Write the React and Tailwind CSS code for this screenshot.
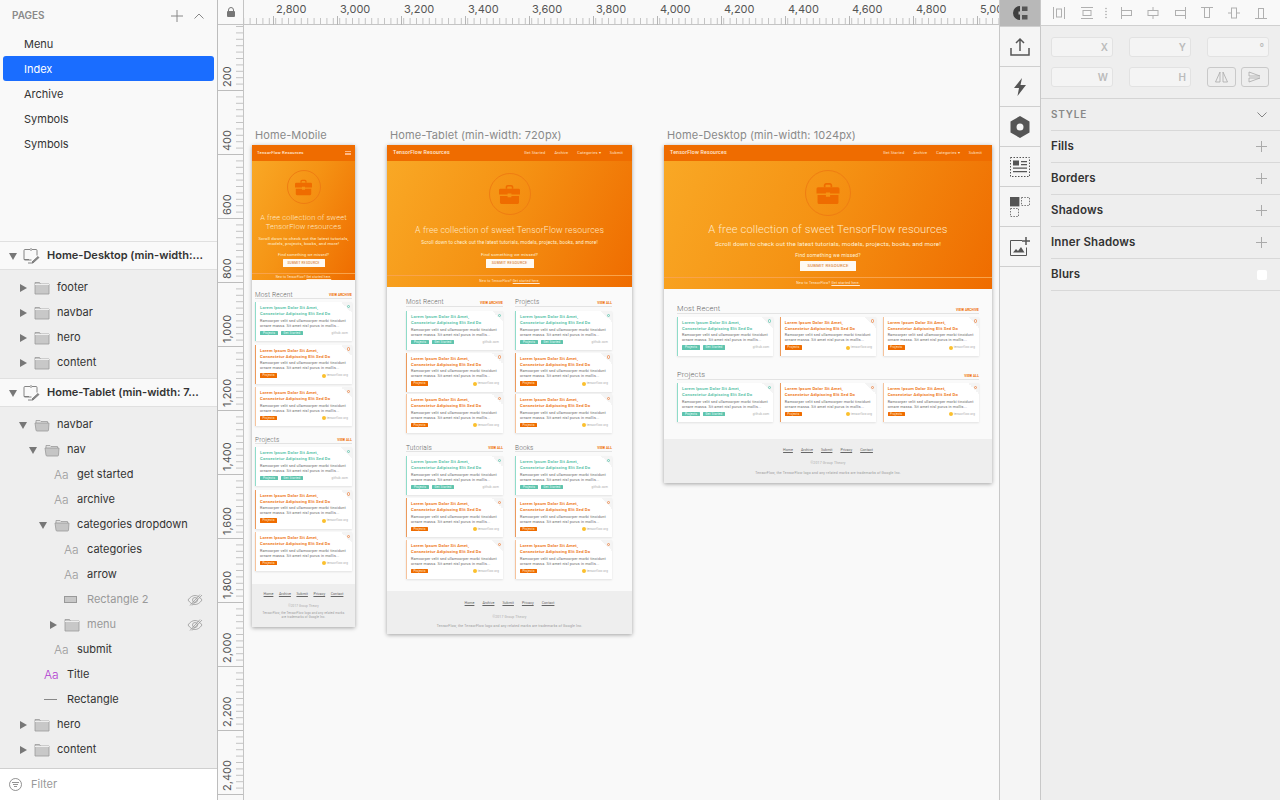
import React from 'react';

const Briefcase = ({ className }) => (
  <svg viewBox="0 0 24 22" className={className} fill="#ef6c00">
    <path d="M8 5V3.2C8 2 9 1 10.2 1h3.6C15 1 16 2 16 3.2V5h-1.6V3.4c0-.4-.3-.8-.8-.8h-3.2c-.5 0-.8.4-.8.8V5z" />
    <path d="M2.5 5h19A1.5 1.5 0 0 1 23 6.500V11H14v-1h-4v1H1V6.500A1.500 1.500 0 0 1 2.500 5z" />
    <path d="M2 12.500h8V14h4v-1.500h8v7A1.500 1.500 0 0 1 20.500 21h-17A1.500 1.500 0 0 1 2 19.500z" />
  </svg>
);

const Card = ({ teal, soft }) => (
  <div className={`relative flex flex-col h-[39px] bg-white pl-[4px] pr-[4px] pt-[3px] shadow-[0_0.5px_2px_rgba(0,0,0,0.1)] border-l-[1.3px] ${teal ? 'border-[#8fdcc9]' : soft ? 'border-[#f6c39c]' : 'border-[#ec9a5c]'}`}>
    <div className="absolute top-0 right-0 w-[11px] h-[11px] bg-[linear-gradient(45deg,transparent_50%,#f4f4f4_50%)]" />
    <div className={`absolute top-[2.500px] right-[2px] w-[3.500px] h-[3.500px] rounded-full border-[0.7px] ${teal ? 'border-[#6fcdb8]' : 'border-[#f0935a]'}`} />
    <div className={`text-[4.200px] leading-[6px] font-semibold whitespace-nowrap ${teal ? 'text-[#55bfa6]' : 'text-[#ee7411]'}`}>
      <div>Lorem Ipsum Dolor Sit Amet,</div>
      <div>Consectetur Adipiscing Elit Sed Do</div>
    </div>
    <div className="mt-[1.500px] text-[3.700px] leading-[5.300px] text-[#666] whitespace-nowrap">
      <div>Ramcorper velit sed ullamcorper morbi tincidunt</div>
      <div>ornare massa. Sit amet nisl purus in mollis...</div>
    </div>
    <div className="mt-[1.500px] flex items-center text-[3px] leading-[5px]">
      {teal ? (
        <>
          <span className="h-[4.500px] w-[18px] text-center bg-[#5fc4ae] text-[#e8fff9] rounded-[0.5px]">Projects</span>
          <span className="ml-[3px] h-[4.500px] w-[22px] text-center bg-[#5fc4ae] text-[#e8fff9] rounded-[0.5px]">Get Started</span>
          <span className="ml-auto text-[#aaa]">github.com</span>
        </>
      ) : (
        <>
          <span className="h-[4.500px] w-[17px] text-center bg-[#ef6c00] text-[#ffe8d2] rounded-[0.5px]">Projects</span>
          <span className="ml-auto w-[4px] h-[4px] rounded-full bg-[#fbc02d]" />
          <span className="ml-[1px] text-[#aaa]">tensorflow.org</span>
        </>
      )}
    </div>
  </div>
);

const Head = ({ title, link, className, size }) => (
  <div className={`flex items-end justify-between border-b-[0.5px] border-[#e3e3e3] ${className}`}>
    <span className={`${size} font-light text-[#666] whitespace-nowrap`}>{title}</span>
    <span className="text-[3.200px] leading-[5px] font-bold text-[#ef6c00] tracking-[0.1px]">{link}</span>
  </div>
);

const Nav = ({ brand, links, px }) => (
  <div className={`h-[16px] bg-[#ef6c00] flex items-center justify-between ${px}`}>
    <span className={`${brand} font-medium text-[#ffe9d6] whitespace-nowrap`}>TensorFlow Resources</span>
    {links ? (
      <div className="flex gap-[9px] text-[3.900px] text-[#ffe3cb]">
        <span>Get Started</span><span>Archive</span><span>Categories ▾</span><span>Submit</span>
      </div>
    ) : (
      <div className="w-[6px] h-[4px] border-y-[0.7px] border-[#ffb784] flex items-center"><div className="w-full h-[0.7px] bg-[#ffb784]" /></div>
    )}
  </div>
);

const Hero = ({ box, circle, icon, title, titleText, desc, descText, find, btn, band }) => (
  <div className={`flex flex-col items-center bg-[linear-gradient(115deg,#f9a825_0%,#f59314_45%,#ef6c00_100%)] ${box}`}>
    <div className={`rounded-full border-[0.7px] border-[#ef7d12] flex items-center justify-center ${circle}`}>
      <Briefcase className={icon} />
    </div>
    <div className={`font-light text-[#ffe8c8] text-center ${title}`}>{titleText}</div>
    <div className={`text-[#fff2da] text-center ${desc}`}>{descText}</div>
    <div className={`text-[#fff2da] ${find}`}>Find something we missed?</div>
    <div className={`bg-[#fffaf3] rounded-[0.5px] flex items-center justify-center font-medium text-[#d98a4a] tracking-[0.2px] ${btn}`}>SUBMIT RESOURCE</div>
    <div className={`mt-auto w-full border-t-[0.5px] border-[#f9a34a] flex items-center justify-center text-[#ffe8d0] ${band}`}>
      <span>New to TensorFlow? <span className="underline">Get started here.</span></span>
    </div>
  </div>
);

const FootLinks = ({ className }) => (
  <div className={`flex justify-center underline text-[#666] tracking-normal ${className}`}>
    <span>Home</span><span>Archive</span><span>Submit</span><span>Privacy</span><span>Contact</span>
  </div>
);

const Board = ({ label, className, children }) => (
  <div className={`absolute ${className}`}>
    <div className="absolute -top-[18px] left-[3px] whitespace-nowrap text-[11px] leading-[16px] text-[#8a8a8a] font-['Inter',sans-serif] tracking-[0.08px]">{label}</div>
    <div className="flex flex-col h-full bg-[#fafafa] shadow-[0_1px_4px_rgba(0,0,0,0.35)] font-['Roboto',sans-serif] tracking-[0.15px]">{children}</div>
  </div>
);

const Mobile = () => (
  <Board label="Home-Mobile" className="left-[8px] top-[120px] w-[103px] h-[482px]">
    <Nav brand="text-[4.300px]" px="pl-[5px] pr-[4px]" />
    <Hero box="h-[119px]" circle="mt-[9px] w-[34px] h-[34px]" icon="w-[19px] h-[17px]"
      title="mt-[8.500px] w-[92px] text-[7.500px] leading-[9px]" titleText="A free collection of sweet TensorFlow resources"
      desc="mt-[5px] w-[92px] text-[4.300px] leading-[5px]" descText="Scroll down to check out the latest tutorials, models, projects, books, and more!"
      find="mt-[6px] text-[3.800px] leading-[5px]" btn="mt-[2.500px] w-[42px] h-[8px] text-[3.300px]"
      band="h-[7px] text-[3px]" />
    <div className="flex-1 flex flex-col px-[3px] pt-[11px]">
      <Head title="Most Recent" link="VIEW ARCHIVE" className="h-[8px]" size="text-[6.500px] leading-[6px]" />
      <div className="mt-[3px] flex flex-col gap-[3.500px]"><Card teal /><Card /><Card soft /></div>
      <Head title="Projects" link="VIEW ALL" className="h-[8px] mt-[10px]" size="text-[6.500px] leading-[6px]" />
      <div className="mt-[3px] flex flex-col gap-[3.500px]"><Card teal /><Card /><Card soft /></div>
    </div>
    <div className="h-[43px] bg-[#eeeeee] flex flex-col items-center pt-[8px]">
      <FootLinks className="gap-[5.500px] text-[3.650px] leading-[5px]" />
      <div className="mt-[6.500px] text-[3px] leading-[5px] text-[#aaa]">©2017 Group Theory</div>
      <div className="mt-[2px] w-[84px] text-center text-[3px] leading-[4.500px] text-[#999]">TensorFlow, the TensorFlow logo and any related marks are trademarks of Google Inc.</div>
    </div>
  </Board>
);

const Tablet = () => (
  <Board label="Home-Tablet (min-width: 720px)" className="left-[143px] top-[120px] w-[245px] h-[489px]">
    <Nav brand="text-[5.300px]" links px="pl-[6px] pr-[9px]" />
    <Hero box="h-[126px]" circle="mt-[12px] w-[42px] h-[42px]" icon="w-[23px] h-[21px]"
      title="mt-[9.500px] text-[8.700px] leading-[11px] whitespace-nowrap" titleText="A free collection of sweet TensorFlow resources"
      desc="mt-[4.500px] text-[4.700px] leading-[6px] whitespace-nowrap" descText="Scroll down to check out the latest tutorials, models, projects, books, and more!"
      find="mt-[5.500px] text-[4.300px] leading-[5px]" btn="mt-[2.500px] w-[48px] h-[9px] text-[3.700px]"
      band="h-[12px] text-[3.300px]" />
    <div className="flex-1 flex flex-col pl-[19px] pr-[20px] pt-[11px]">
      <div className="grid grid-cols-2 gap-x-[12px]">
        {[['Most Recent', 'VIEW ARCHIVE'], ['Projects', 'VIEW ALL']].map(([t, l]) => (
          <div key={t}><Head title={t} link={l} className="h-[9px]" size="text-[6.500px] leading-[7px]" />
            <div className="mt-[4px] flex flex-col gap-[2.500px]"><Card teal /><Card /><Card soft /></div></div>
        ))}
      </div>
      <div className="mt-[11px] grid grid-cols-2 gap-x-[12px]">
        {['Tutorials', 'Books'].map((t) => (
          <div key={t}><Head title={t} link="VIEW ALL" className="h-[8px]" size="text-[6.500px] leading-[6px]" />
            <div className="mt-[4px] flex flex-col gap-[3px]"><Card teal /><Card /><Card soft /></div></div>
        ))}
      </div>
    </div>
    <div className="h-[43px] bg-[#eeeeee] flex flex-col items-center pt-[9px]">
      <FootLinks className="gap-[8px] text-[3.650px] leading-[6px]" />
      <div className="mt-[8.500px] text-[3.400px] leading-[5px] text-[#aaa]">©2017 Group Theory</div>
      <div className="mt-[4px] text-[3.500px] leading-[5px] text-[#999] whitespace-nowrap">TensorFlow, the TensorFlow logo and any related marks are trademarks of Google Inc.</div>
    </div>
  </Board>
);

const Desktop = () => (
  <Board label="Home-Desktop (min-width: 1024px)" className="left-[420px] top-[120px] w-[328px] h-[338px]">
    <Nav brand="text-[5.300px]" links px="pl-[6px] pr-[10px]" />
    <Hero box="h-[128px]" circle="mt-[9px] w-[46px] h-[46px]" icon="w-[26px] h-[23px]"
      title="mt-[6.500px] text-[11.100px] leading-[13px] whitespace-nowrap" titleText="A free collection of sweet TensorFlow resources"
      desc="mt-[4px] text-[6.100px] leading-[7px] whitespace-nowrap" descText="Scroll down to check out the latest tutorials, models, projects, books, and more!"
      find="mt-[5.500px] text-[5px] leading-[6px]" btn="mt-[3px] w-[56px] h-[10px] text-[4.300px]"
      band="h-[12px] text-[3.500px]" />
    <div className="flex-1 flex flex-col px-[13px] pt-[14px]">
      <Head title="Most Recent" link="VIEW ARCHIVE" className="h-[10.500px]" size="text-[7.500px] leading-[8px]" />
      <div className="mt-[3px] grid grid-cols-3 gap-x-[6.500px]"><Card teal /><Card /><Card soft /></div>
      <Head title="Projects" link="VIEW ALL" className="h-[10.500px] mt-[14px]" size="text-[7.500px] leading-[8px]" />
      <div className="mt-[3px] grid grid-cols-3 gap-x-[6.500px]"><Card teal /><Card /><Card soft /></div>
    </div>
    <div className="h-[44px] bg-[#eeeeee] flex flex-col items-center pt-[8.500px]">
      <FootLinks className="gap-[8px] text-[3.650px] leading-[5px]" />
      <div className="mt-[8.500px] text-[3.500px] leading-[5px] text-[#aaa]">©2017 Group Theory</div>
      <div className="mt-[4.500px] text-[3.500px] leading-[5px] text-[#999] whitespace-nowrap">TensorFlow, the TensorFlow logo and any related marks are trademarks of Google Inc.</div>
    </div>
  </Board>
);

const Arrow = ({ dir }) => (
  <svg width="8" height="8" viewBox="0 0 8 8" fill="#777">
    {dir === 'down' ? <path d="M0 1h8L4 8z" /> : <path d="M1 0l7 4-7 4z" />}
  </svg>
);

const Folder = ({ open }) => (
  <svg width="16" height="14" viewBox="0 0 16 14">
    {open ? (
      <>
        <path d="M2 2.500h4l1 1h6.500v2H2z" fill="#e2e2e2" stroke="#999" strokeWidth="0.8" />
        <path d="M1 5h14l-0.500 7a1 1 0 0 1-1 1h-10.500a1 1 0 0 1-1-1z" fill="#c5c5c5" stroke="#999" strokeWidth="0.8" />
      </>
    ) : (
      <>
        <path d="M1 1.500h4.500l1 1.500h8.500v10h-14z" fill="#c8c8c8" stroke="#9a9a9a" strokeWidth="0.8" />
        <path d="M1 3.500h14" stroke="#eee" strokeWidth="1" />
      </>
    )}
  </svg>
);

const Board2 = () => (
  <svg width="18" height="18" viewBox="0 0 18 18" fill="none" stroke="#777" strokeWidth="0.9">
    <path d="M7 2.500H2a1 1 0 0 0-1 1v9h5m8-4V3.500a1 1 0 0 0-1-1H9" />
    <path d="M8 1v3" />
    <path d="M1.500 13h7" />
    <path d="M10 16l6-5.500-1-1-6 5.500z" fill="#888" />
    <path d="M5 16h5" />
  </svg>
);

const Eye = () => (
  <svg width="16" height="12" viewBox="0 0 16 12" fill="none" stroke="#999" strokeWidth="0.8">
    <path d="M1 6c2-3 4.500-4.500 7-4.500S13 3 15 6c-2 3-4.500 4.500-7 4.500S3 9 1 6z" />
    <circle cx="8" cy="6" r="2.500" />
    <path d="M3 11.500L13 .5M5 11.500L15 1" />
  </svg>
);

const levels = ['pl-[17px]', 'pl-[27px]', 'pl-[37px]', 'pl-[47px]'];

const Row = ({ lvl = 0, arrow, icon, label, muted, hidden }) => (
  <div className={`h-[25px] flex items-center pr-[14px] ${levels[lvl]}`}>
    <div className="w-[17px] shrink-0 flex items-center pl-[2px]">{arrow && <Arrow dir={arrow} />}</div>
    <div className="w-[23px] shrink-0 flex items-center">
      {icon === 'closed' && <Folder />}
      {icon === 'open' && <Folder open />}
      {icon === 'aa' && <span className="text-[12px] text-[#9a9a9a] font-light">Aa</span>}
      {icon === 'title' && <span className="text-[12px] text-[#b13bd1] font-light">Aa</span>}
      {icon === 'rect' && <div className="w-[13px] h-[7px] bg-[#c8c8c8] border border-[#999]" />}
      {icon === 'line' && <div className="w-[13px] h-[1.500px] bg-[#888]" />}
    </div>
    <span className={muted ? 'text-[#999]' : 'text-[#333]'}>{label}</span>
    {hidden && <span className="ml-auto flex"><Eye /></span>}
  </div>
);

const BoardRow = ({ label }) => (
  <div className="h-[29px] flex items-center bg-[#f9f9f9] border-y border-[#e0e0e0]">
    <div className="w-[23px] shrink-0 pl-[9px] flex"><Arrow dir="down" /></div>
    <div className="w-[24px] shrink-0 flex"><Board2 /></div>
    <span className="font-semibold text-[#333] whitespace-nowrap">{label}</span>
  </div>
);

const TopRuler = () => {
  const labels = ['2,800', '3,000', '3,200', '3,400', '3,600', '3,800', '4,000', '4,200', '4,400', '4,600', '4,800', '5,000'];
  const ticks = Array.from({ length: 124 }, (_, i) => 218 + i * 6.4);
  return (
    <svg className="block" width="755" height="25" viewBox="244 0 755 25">
      {ticks.map((x, i) => <path key={i} d={`M${x + 0.1} 18V25`} stroke="#c4c4c4" strokeWidth="1" />)}
      {labels.map((l, i) => (
        <g key={l}>
          <path d={`M${273.500 + i * 64} 16V25`} stroke="#b5b5b5" />
          <text x={276 + i * 64} y="13" fontSize="11" fill="#555" fontFamily="Inter, sans-serif">{l}</text>
        </g>
      ))}
    </svg>
  );
};

const SideRuler = () => {
  const labels = ['200', '400', '600', '800', '1,000', '1,200', '1,400', '1,600', '1,800', '2,000', '2,200', '2,400'];
  const ticks = Array.from({ length: 124 }, (_, i) => i * 6.4);
  return (
    <svg className="block" width="26" height="775" viewBox="218 25 26 775">
      {ticks.map((y, i) => <path key={i} d={`M236 ${26.500 + y}H244`} stroke="#c4c4c4" strokeWidth="1" />)}
      {labels.map((l, i) => {
        const y = 90 + i * 64;
        return (
          <g key={l}>
            <path d={`M218 ${y + 0.500}H244`} stroke="#bdbdbd" />
            <text transform={`translate(231 ${y - 3}) rotate(-90)`} fontSize="11" fill="#555" fontFamily="Inter, sans-serif">{l}</text>
          </g>
        );
      })}
    </svg>
  );
};

const AlignIcons = () => {
  const s = { fill: 'none', stroke: '#b0b0b0', strokeWidth: 1 };
  const items = [
    <><path d="M2.500 2v12M13.500 2v12" /><rect x="5.500" y="4" width="5" height="8" /></>,
    <><path d="M2 2.500h12M2 13.500h12" /><rect x="4" y="5.500" width="8" height="5" /></>,
    null,
    <><path d="M2.500 2v12" /><rect x="2.500" y="5.500" width="10" height="5" /></>,
    <><path d="M8 2v12" /><rect x="3" y="5.500" width="10" height="5" fill="#f9f9f9" /></>,
    <><path d="M13.500 2v12" /><rect x="3.500" y="5.500" width="10" height="5" /></>,
    <><path d="M2 2.500h12" /><rect x="5.500" y="2.500" width="5" height="10" /></>,
    <><path d="M2 8h12" /><rect x="5.500" y="3" width="5" height="10" fill="#f9f9f9" /></>,
    <><path d="M2 13.500h12" /><rect x="5.500" y="3.500" width="5" height="10" /></>,
  ];
  const gaps = ['ml-[10px]', 'ml-[12px]', 'ml-[9px]', 'ml-[11px]', 'ml-[10px]', 'ml-[11px]', 'ml-[11px]', 'ml-[11px]', 'ml-[11px]'];
  return (
    <div className="h-[26px] bg-[#f9f9f9] border-b border-[#d0d0d0] flex items-center">
      {items.map((it, i) => it ? (
        <svg key={i} className={`${gaps[i]} shrink-0`} width="16" height="16" viewBox="0 0 16 16" {...s}>{it}</svg>
      ) : (
        <svg key={i} className={`${gaps[i]} shrink-0`} width="4" height="12" viewBox="0 0 4 12" fill="#aaa"><circle cx="2" cy="1.500" r="0.800" /><circle cx="2" cy="4.500" r="0.800" /><circle cx="2" cy="7.500" r="0.800" /><circle cx="2" cy="10.500" r="0.800" /></svg>
      ))}
    </div>
  );
};

const Field = ({ l, w = 'w-[62px]' }) => (
  <div className={`h-[20px] ${w} rounded-[3px] bg-[#f4f4f4] border border-[#e2e2e2] flex items-center justify-end pr-[4px] text-[10px] font-semibold text-[#bbb]`}>{l}</div>
);

const Plus = () => (
  <svg width="11" height="11" viewBox="0 0 11 11" stroke="#aaa" strokeWidth="1"><path d="M5.500 0v11M0 5.500h11" /></svg>
);

const Prop = ({ name, blur }) => (
  <div className="h-[32px] ml-[10px] border-b border-[#d8d8d8] flex items-center justify-between pr-[13px] text-[11.500px]">
    <span className="font-semibold text-[#333] tracking-[0.15px]">{name}</span>
    {blur ? <div className="w-[10px] h-[10px] bg-white rounded-[2px] mr-[0.500px]" /> : <Plus />}
  </div>
);

const ToolCell = ({ children }) => (
  <div className="h-[40px] border-b border-[#cfcfcf] flex items-center justify-center">{children}</div>
);

export default function App() {
  return (
    <div className="w-[1280px] h-[800px] overflow-hidden flex bg-[#f9f9f9] text-[11px] font-['Inter',sans-serif]">
      <div className="w-[218px] shrink-0 flex flex-col border-r border-[#bdbdbd] bg-[#eeeeee]">
        <div className="h-[241px] shrink-0 bg-[#f9f9f9]">
          <div className="h-[31px] flex items-center pl-[12px] pr-[13px] text-[10px] font-semibold text-[#8a8a8a]">
            <span>PAGES</span>
            <svg className="ml-auto" width="12" height="12" viewBox="0 0 12 12" stroke="#888" strokeWidth="1"><path d="M6 0v12M0 6h12" /></svg>
            <svg className="ml-[11px]" width="10" height="6" viewBox="0 0 10 6" fill="none" stroke="#888" strokeWidth="1"><path d="M.5 5.500L5 1l4.500 4.500" /></svg>
          </div>
          <div className="flex flex-col text-[#333] pl-[3px] pr-[3px]">
            <div className="h-[25px] flex items-center pl-[21px] pt-[1px]">Menu</div>
            <div className="h-[25px] flex items-center pl-[21px] pt-[1px] bg-[#1a6dff] text-white rounded-[3px]">Index</div>
            <div className="h-[25px] flex items-center pl-[21px] pt-[1px]">Archive</div>
            <div className="h-[25px] flex items-center pl-[21px] pt-[1px]">Symbols</div>
            <div className="h-[25px] flex items-center pl-[21px] pt-[1px]">Symbols</div>
          </div>
        </div>
        <div className="flex-1 overflow-hidden">
          <BoardRow label="Home-Desktop (min-width:..." />
          <div className="pt-[5px] pb-[3px]">
            <Row arrow="right" icon="closed" label="footer" />
            <Row arrow="right" icon="closed" label="navbar" />
            <Row arrow="right" icon="closed" label="hero" />
            <Row arrow="right" icon="closed" label="content" />
          </div>
          <BoardRow label="Home-Tablet (min-width: 7..." />
          <div className="pt-[5px]">
            <Row arrow="down" icon="open" label="navbar" />
            <Row lvl={1} arrow="down" icon="open" label="nav" />
            <Row lvl={2} icon="aa" label="get started" />
            <Row lvl={2} icon="aa" label="archive" />
            <Row lvl={2} arrow="down" icon="open" label="categories dropdown" />
            <Row lvl={3} icon="aa" label="categories" />
            <Row lvl={3} icon="aa" label="arrow" />
            <Row lvl={3} icon="rect" label="Rectangle 2" muted hidden />
            <Row lvl={3} arrow="right" icon="closed" label="menu" muted hidden />
            <Row lvl={2} icon="aa" label="submit" />
            <Row lvl={1} icon="title" label="Title" />
            <Row lvl={1} icon="line" label="Rectangle" />
            <Row arrow="right" icon="closed" label="hero" />
            <Row arrow="right" icon="closed" label="content" />
            <Row arrow="right" icon="closed" label="" />
          </div>
        </div>
        <div className="h-[32px] shrink-0 bg-white border-t border-[#cfcfcf] flex items-center pl-[9px] text-[#999]">
          <svg width="13" height="13" viewBox="0 0 13 13" fill="none" stroke="#777" strokeWidth="0.8"><circle cx="6.500" cy="6.500" r="6" /><path d="M3 4.500h7M4 6.500h5M5 8.500h3" /></svg>
          <span className="ml-[9px]">Filter</span>
        </div>
      </div>

      <div className="w-[781px] shrink-0 flex flex-col">
        <div className="h-[25px] flex bg-[#f9f9f9] border-b border-[#c4c4c4]">
          <div className="w-[26px] shrink-0 border-r border-[#c4c4c4] flex items-center justify-center">
            <svg width="8" height="10" viewBox="0 0 8 10" fill="#777"><rect y="4" width="8" height="6" rx="1" /><path d="M1.500 4.500V3a2.500 2.500 0 0 1 5 0v1.500" fill="none" stroke="#777" /></svg>
          </div>
          <TopRuler />
        </div>
        <div className="flex-1 flex min-h-0">
          <div className="w-[26px] shrink-0 border-r border-[#c4c4c4] overflow-hidden"><SideRuler /></div>
          <div className="relative flex-1 bg-[#f9f9f9] overflow-hidden">
            <Mobile />
            <Tablet />
            <Desktop />
          </div>
        </div>
      </div>

      <div className="w-[42px] shrink-0 flex flex-col bg-[#f5f5f5] border-x border-[#c8c8c8]">
        <div className="h-[26px] bg-[#b8b8b8] flex items-center justify-center">
          <svg width="15" height="14" viewBox="0 0 15 14" fill="#3f3f3f">
            <path d="M7 0v5.500H5.500v3H7V14A7 7 0 0 1 7 0z" />
            <path d="M9 .5h5.500v4.500H9zM9 9h5.500v4.500H9z" fill="#555" />
          </svg>
        </div>
        <div className="h-[1px] bg-[#cfcfcf]" />
        <ToolCell>
          <svg width="20" height="20" viewBox="0 0 20 20" fill="none" stroke="#555" strokeWidth="1.500"><path d="M1 11v7h18v-7" /><path d="M10 14V2M6 6l4-4 4 4" /></svg>
        </ToolCell>
        <ToolCell>
          <svg width="14" height="18" viewBox="0 0 14 18" fill="#555"><path d="M9 0L1 10h5l-1.500 8L13 7H7.500z" /></svg>
        </ToolCell>
        <ToolCell>
          <svg width="20" height="22" viewBox="0 0 20 22"><path fillRule="evenodd" fill="#555" d="M10 0l9.500 5.500v11L10 22 .5 16.500v-11zM10 7.500a3.500 3.500 0 1 0 0 7 3.500 3.500 0 0 0 0-7z" /></svg>
        </ToolCell>
        <ToolCell>
          <svg width="20" height="20" viewBox="0 0 20 20" fill="#555"><rect x="0.500" y="0.500" width="19" height="19" fill="none" stroke="#555" strokeDasharray="1.500 1.500" /><rect x="3" y="3.500" width="6" height="5" /><path d="M11 4h6v1.300h-6zM11 7h6v1.300h-6zM3 10.500h14v1.300H3zM3 14h14v1.300H3z" /></svg>
        </ToolCell>
        <ToolCell>
          <svg width="20" height="20" viewBox="0 0 20 20" fill="none" stroke="#555" strokeWidth="0.8"><rect x="0" y="0" width="9" height="9" fill="#555" /><rect x="11.500" y="0.500" width="8" height="8" strokeDasharray="1.500 1.300" /><rect x="0.500" y="11.500" width="8" height="8" strokeDasharray="1.500 1.300" /></svg>
        </ToolCell>
        <ToolCell>
          <svg width="20" height="20" viewBox="0 0 20 20" fill="none" stroke="#555"><path d="M12 3.500H.5v15h16v-8" /><path d="M3 15.500l3-3.500 2 2 3-4 3.500 5.500z" fill="#555" stroke="none" /><path d="M16 0v8M12 4h8" strokeWidth="1.500" /></svg>
        </ToolCell>
      </div>

      <div className="flex-1 flex flex-col bg-[#eeeeee]">
        <AlignIcons />
        <div className="h-[73px] border-b border-[#d4d4d4] pl-[10px] pt-[11px] pr-[11px] flex flex-col gap-[10px]">
          <div className="flex justify-between"><Field l="X" /><Field l="Y" /><Field l="°" /></div>
          <div className="flex justify-between">
            <Field l="W" /><Field l="H" />
            <div className="flex gap-[5px] w-[62px]">
              <div className="flex-1 rounded-[3px] border border-[#c9c9c9] flex items-center justify-center">
                <svg width="13" height="12" viewBox="0 0 13 12" fill="none" stroke="#aaa" strokeWidth="0.8"><path d="M5 1v10H.5zM8 1v10h4.500z" /></svg>
              </div>
              <div className="flex-1 h-[20px] rounded-[3px] border border-[#c9c9c9] flex items-center justify-center">
                <svg width="13" height="12" viewBox="0 0 13 12" fill="none" stroke="#aaa" strokeWidth="0.8"><path d="M1 1l11 4H1zM1 7h11L1 11z" /></svg>
              </div>
            </div>
          </div>
        </div>
        <div className="h-[32px] ml-[10px] border-b border-[#d8d8d8] flex items-center justify-between pr-[13px] text-[10px] font-semibold text-[#888] tracking-[0.8px]">
          <span>STYLE</span>
          <svg width="10" height="6" viewBox="0 0 10 6" fill="none" stroke="#777" strokeWidth="0.9"><path d="M.5.5L5 5 9.500.5" /></svg>
        </div>
        <Prop name="Fills" />
        <Prop name="Borders" />
        <Prop name="Shadows" />
        <Prop name="Inner Shadows" />
        <Prop name="Blurs" blur />
      </div>
    </div>
  );
}
